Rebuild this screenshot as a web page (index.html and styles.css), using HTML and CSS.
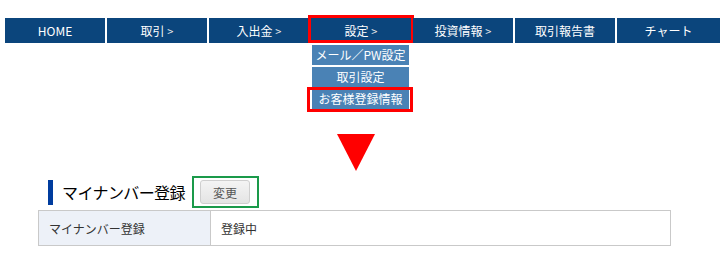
FILE: index.html
```html
<!DOCTYPE html>
<html lang="ja">
<head>
  <meta charset="UTF-8" />
  <title>お客様登録情報</title>
  <link rel="stylesheet" href="styles.css">
</head>
<body>
  <div class="page">
    <!-- Global menu -->
    <ul class="gnav">
      <li class="gnav-item">HOME</li>
      <li class="gnav-item">取引 <span class="arr">&gt;</span></li>
      <li class="gnav-item">入出金 <span class="arr">&gt;</span></li>
      <li class="gnav-item gnav-item--open marked">
        設定 <span class="arr">&gt;</span>
        <ul class="subnav">
          <li class="subnav-item">メール／PW設定</li>
          <li class="subnav-item">取引設定</li>
          <li class="subnav-item marked">お客様登録情報</li>
        </ul>
      </li>
      <li class="gnav-item">投資情報 <span class="arr">&gt;</span></li>
      <li class="gnav-item">取引報告書</li>
      <li class="gnav-item gnav-item--last">チャート</li>
    </ul>

    <div class="arrow-down"></div>

    <!-- My number -->
    <div class="sec-head">
      <h2 class="sec-title">マイナンバー登録</h2>
      <div class="btn-frame">
        <button class="btn-change">変更</button>
      </div>
    </div>
    <table class="info-table">
      <tr>
        <th>マイナンバー登録</th>
        <td>登録中</td>
      </tr>
    </table>
  </div>
</body>
</html>
```

FILE: styles.css
```css
body {
  margin: 0;
  background: #fff;
  font-family: "Noto Sans CJK JP", "Noto Sans", sans-serif;
  font-size: 12px;
  color: #333;
}

.page {
  padding-top: 18px;
}

/* Global menu */
.gnav {
  display: flex;
  gap: 2px;
  margin: 0;
  padding: 0 0 0 5px;
  list-style: none;
}

.gnav-item {
  position: relative;
  width: 100px;
  height: 25px;
  line-height: 25px;
  text-align: center;
  background: #0b457c;
  color: #fff;
}

.gnav-item--last {
  width: 103px;
}

.arr {
  font-size: 11px;
  color: #e8e8e8;
}

/* red annotation boxes */
.marked::after {
  content: "";
  position: absolute;
  top: -3px;
  left: -3px;
  right: -3px;
  bottom: 0;
  border: 3px solid #ff0000;
  pointer-events: none;
}

.subnav {
  position: absolute;
  top: 27px;
  left: 1px;
  width: 97px;
  margin: 0;
  padding: 0;
  list-style: none;
  display: flex;
  flex-direction: column;
  gap: 2px;
  z-index: 10;
}

.subnav-item {
  position: relative;
  height: 20px;
  line-height: 20px;
  background: #4a82b5;
  color: #fff;
  text-align: center;
  white-space: nowrap;
}

.subnav-item.marked::after {
  top: -2px;
  left: -5px;
  right: -4px;
  bottom: -3px;
}

.arrow-down {
  width: 0;
  height: 0;
  margin: 91px 0 0 337px;
  border-left: 19px solid transparent;
  border-right: 19px solid transparent;
  border-top: 37px solid #ff0000;
}

/* Section heading */
.sec-head {
  display: flex;
  align-items: center;
  margin: 5px 0 2px 48px;
}

.sec-title {
  margin: 0;
  padding-left: 9px;
  border-left: 5px solid #003c9e;
  height: 25px;
  line-height: 25px;
  font-size: 16px;
  font-weight: normal;
  letter-spacing: -0.6px;
  color: #000;
}

.btn-frame {
  margin-left: 7px;
  padding: 2px 7px 2px 6px;
  border: 2px solid #1a9a4a;
}

.btn-change {
  display: block;
  width: 50px;
  height: 24px;
  padding: 0;
  border: 1px solid #cfcfcf;
  border-radius: 3px;
  background: linear-gradient(#f4f4f4, #e4e4e4);
  font-family: inherit;
  font-size: 12px;
  color: #555;
}

/* Info table */
.info-table {
  margin-left: 38px;
  width: 633px;
  border-collapse: collapse;
  border: 1px solid #c9c9c9;
}

.info-table th,
.info-table td {
  height: 34px;
  padding: 0 10px;
  text-align: left;
  font-weight: normal;
  color: #333;
}

.info-table th {
  width: 151px;
  background: #edf1f8;
  border-right: 1px solid #c9c9c9;
}
```
